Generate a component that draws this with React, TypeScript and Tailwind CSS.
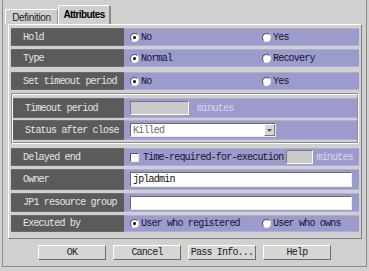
import React from "react";

// --- small widgets ---
const mono = "font-['Liberation_Mono','Courier_New',monospace] text-[10px] tracking-[-0.8px]";

const Radio = ({ checked }: { checked?: boolean }) => (
  <span className="relative inline-flex w-[9px] h-[9px] rounded-full bg-white border border-t-[#555] border-l-[#555] border-r-[#eee] border-b-[#eee] items-center justify-center shrink-0">
    {checked && <span className="w-[3px] h-[3px] rounded-full bg-black" />}
  </span>
);

const Option = ({ checked, text }: { checked?: boolean; text: string }) => (
  <span className="flex items-center gap-[2px]">
    <Radio checked={checked} />
    <span className="text-[#141432]">{text}</span>
  </span>
);

interface RowProps {
  label: string;
  className: string;
  labelClass?: string;
  children?: React.ReactNode;
}

const Row = ({ label, className, labelClass = "w-[113px]", children }: RowProps) => (
  <div className={`flex ${className}`}>
    <div className={`${labelClass} bg-[#5b5b5b] text-[#e6e6e6] flex items-center pl-[12px] border-y border-[#6a6a6a]`}>
      {label}
    </div>
    <div className="flex-1 bg-[#9c9ccc] border-y border-[#adadd8] flex items-center pl-[6px]">
      {children}
    </div>
  </div>
);

const TwoOptions = ({ a, b, aChecked = true }: { a: string; b: string; aChecked?: boolean }) => (
  <div className="flex items-center w-full">
    <div className="w-[132px]">
      <Option checked={aChecked} text={a} />
    </div>
    <Option checked={!aChecked} text={b} />
  </div>
);

const Button = ({ text }: { text: string }) => (
  <div className="w-[68px] h-[15px] bg-[#d6d6d2] border border-t-white border-l-white border-r-[#6c6c6c] border-b-[#6c6c6c] flex items-center justify-center text-[#222]">
    {text}
  </div>
);

export default function App() {
  return (
    <div className={`w-[369px] h-[271px] bg-[#d0d0d0] px-[2px] overflow-hidden ${mono}`}>
      <div className="h-[267px] border-x border-b border-[#8a8a8a] flex flex-col">
        {/* tabs */}
        <div className="h-[24px] flex items-end pl-[2px] font-['Liberation_Sans',Arial,sans-serif] text-[10px] tracking-[-0.5px]">
          <div className="w-[53px] h-[15px] bg-[#cdcdcd] border-t border-l border-white border-r border-r-[#909090] rounded-tl-[2px] flex items-center justify-center text-[#222] tracking-[-0.3px]">
            Definition
          </div>
          <div className="w-[53px] h-[19px] bg-[#d0d0d0] border-t border-l border-white border-r-2 border-r-[#8a8a8a] rounded-t-[2px] flex items-center justify-center font-bold text-black tracking-[-0.6px] pb-[2px]">
            Attributes
          </div>
        </div>

        {/* panel */}
        <div className="ml-[5px] w-[354px] h-[215px] border-t border-l border-white border-r border-b border-r-[#7e7e7e] border-b-[#7e7e7e] pl-[2px] pr-[2px] pt-[3px] flex flex-col">
          <Row label="Hold" className="h-[18px]">
            <TwoOptions a="No" b="Yes" />
          </Row>
          <Row label="Type" className="h-[18px] mt-[3px]">
            <TwoOptions a="Normal" b="Recovery" />
          </Row>
          <Row label="Set timeout period" className="h-[18px] mt-[5px]">
            <TwoOptions a="No" b="Yes" />
          </Row>

          {/* group box */}
          <div className="mt-[3px] h-[51px] border border-t-[#8c8c8c] border-l-[#8c8c8c] border-r-white border-b-white">
            <div className="h-full border border-t-white border-l-white border-r-[#8c8c8c] border-b-[#8c8c8c] pt-[3px] flex flex-col">
              <Row label="Timeout period" className="h-[20px]" labelClass="w-[111px]">
                <div className="w-[59px] h-[14px] bg-[#cacaca] border border-t-[#7a7a7a] border-l-[#7a7a7a] border-r-white border-b-white" />
                <span className="ml-[8px] text-[#d8d8ea]">minutes</span>
              </Row>
              <Row label="Status after close" className="h-[20px] mt-[2px]" labelClass="w-[111px]">
                <div className="w-[146px] h-[14px] bg-white border border-t-[#6a6a6a] border-l-[#6a6a6a] border-r-[#eee] border-b-[#eee] flex items-center">
                  <span className="flex-1 pl-[2px] text-[#6a6a6a]">Killed</span>
                  <div className="w-[11px] h-[12px] bg-[#d6d6d2] border border-t-white border-l-white border-r-[#777] border-b-[#777] flex items-center justify-center">
                    <svg width="5" height="3" viewBox="0 0 5 3">
                      <path d="M0 0 H5 L2.5 3 Z" fill="#555" />
                    </svg>
                  </div>
                </div>
              </Row>
            </div>
          </div>

          <Row label="Delayed end" className="h-[18px] mt-[4px]">
            <span className="w-[9px] h-[9px] bg-white border border-t-[#555] border-l-[#555] border-r-[#eee] border-b-[#eee] shrink-0" />
            <span className="ml-[4px] text-[#141432]">Time-required-for-execution</span>
            <div className="ml-[3px] w-[27px] h-[14px] bg-[#cacaca] border border-t-[#7a7a7a] border-l-[#7a7a7a] border-r-white border-b-white" />
            <span className="ml-[3px] text-[#d8d8ea]">minutes</span>
          </Row>
          <Row label="Owner" className="h-[21px] mt-[3px]">
            <div className="w-[222px] h-[15px] bg-white border border-t-[#6a6a6a] border-l-[#6a6a6a] border-r-[#eee] border-b-[#eee] flex items-center pl-[2px] text-[#111]">
              jpladmin
            </div>
          </Row>
          <Row label="JP1 resource group" className="h-[19px] mt-[3px]">
            <div className="w-[222px] h-[14px] bg-white border border-t-[#6a6a6a] border-l-[#6a6a6a] border-r-[#eee] border-b-[#eee]" />
          </Row>
          <Row label="Executed by" className="h-[17px] mt-[3px]">
            <TwoOptions a="User who registered" b="User who owns" />
          </Row>
        </div>

        {/* buttons */}
        <div className="mt-[6px] flex justify-center gap-[7px]">
          <Button text="OK" />
          <Button text="Cancel" />
          <Button text="Pass Info..." />
          <Button text="Help" />
        </div>
      </div>
    </div>
  );
}
